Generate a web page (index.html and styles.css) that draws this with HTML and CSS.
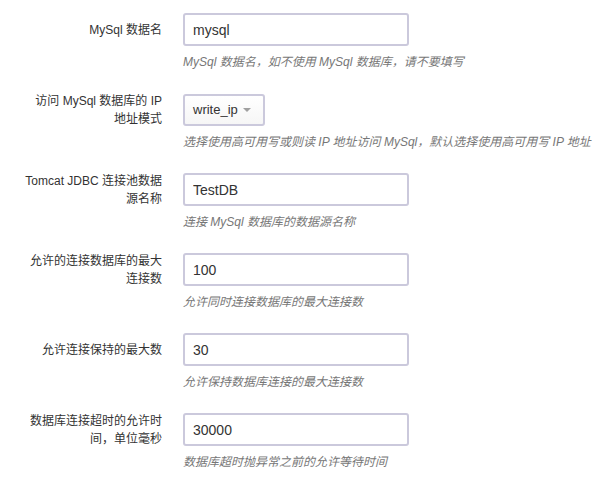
FILE: index.html
```html
<!DOCTYPE html>
<html>
<head>
<meta charset="utf-8">
<link rel="stylesheet" href="styles.css">
</head>
<body>
<form class="form">
  <div class="group">
    <div class="row">
      <label class="label">MySql 数据名</label>
      <input class="input" type="text" value="mysql">
    </div>
    <p class="help">MySql 数据名，如不使用 MySql 数据库，请不要填写</p>
  </div>
  <div class="group">
    <div class="row">
      <label class="label">访问 MySql 数据库的 IP 地址模式</label>
      <div class="select"><span>write_ip</span><span class="caret"></span></div>
    </div>
    <p class="help">选择使用高可用写或则读 IP 地址访问 MySql，默认选择使用高可用写 IP 地址</p>
  </div>
  <div class="group">
    <div class="row">
      <label class="label">Tomcat JDBC 连接池数据源名称</label>
      <input class="input" type="text" value="TestDB">
    </div>
    <p class="help">连接 MySql 数据库的数据源名称</p>
  </div>
  <div class="group">
    <div class="row">
      <label class="label">允许的连接数据库的最大连接数</label>
      <input class="input" type="text" value="100">
    </div>
    <p class="help">允许同时连接数据库的最大连接数</p>
  </div>
  <div class="group">
    <div class="row">
      <label class="label">允许连接保持的最大数</label>
      <input class="input" type="text" value="30">
    </div>
    <p class="help">允许保持数据库连接的最大连接数</p>
  </div>
  <div class="group">
    <div class="row">
      <label class="label">数据库连接超时的允许时间，单位毫秒</label>
      <input class="input" type="text" value="30000">
    </div>
    <p class="help">数据库超时抛异常之前的允许等待时间</p>
  </div>
</form>
</body>
</html>
```

FILE: styles.css
```css
html, body {
  margin: 0;
  padding: 0;
  background: #fff;
}
body {
  font-family: "Liberation Sans", "Noto Sans CJK SC", sans-serif;
  color: #333;
}
.form {
  padding-top: 13px;
}
.group {
  height: 80px;
}
.row {
  display: flex;
  align-items: center;
  gap: 21px;
  height: 33px;
}
.label {
  width: 137px;
  margin-left: 25px;
  text-align: right;
  font-size: 12px;
  line-height: 18px;
}
.input {
  box-sizing: border-box;
  width: 226px;
  height: 33px;
  margin: 0;
  padding: 0 8px;
  border: 2px solid #cbc9dc;
  border-radius: 3px;
  font-family: inherit;
  font-size: 14px;
  color: #333;
  background: #fff;
  outline: none;
}
.select {
  box-sizing: border-box;
  width: 82px;
  height: 32px;
  padding: 0 12px 0 8px;
  border: 2px solid #cbc9dc;
  border-radius: 3px;
  display: flex;
  align-items: center;
  justify-content: space-between;
  font-size: 13px;
  background: linear-gradient(#fff, #f6f6f6);
}
.caret {
  width: 0;
  height: 0;
  border-left: 4px solid transparent;
  border-right: 4px solid transparent;
  border-top: 4px solid #a0a0a0;
}
.help {
  margin: 8px 0 0 183px;
  height: 17px;
  font-size: 12px;
  line-height: 17px;
  font-style: italic;
  color: #777;
  white-space: nowrap;
}
```
